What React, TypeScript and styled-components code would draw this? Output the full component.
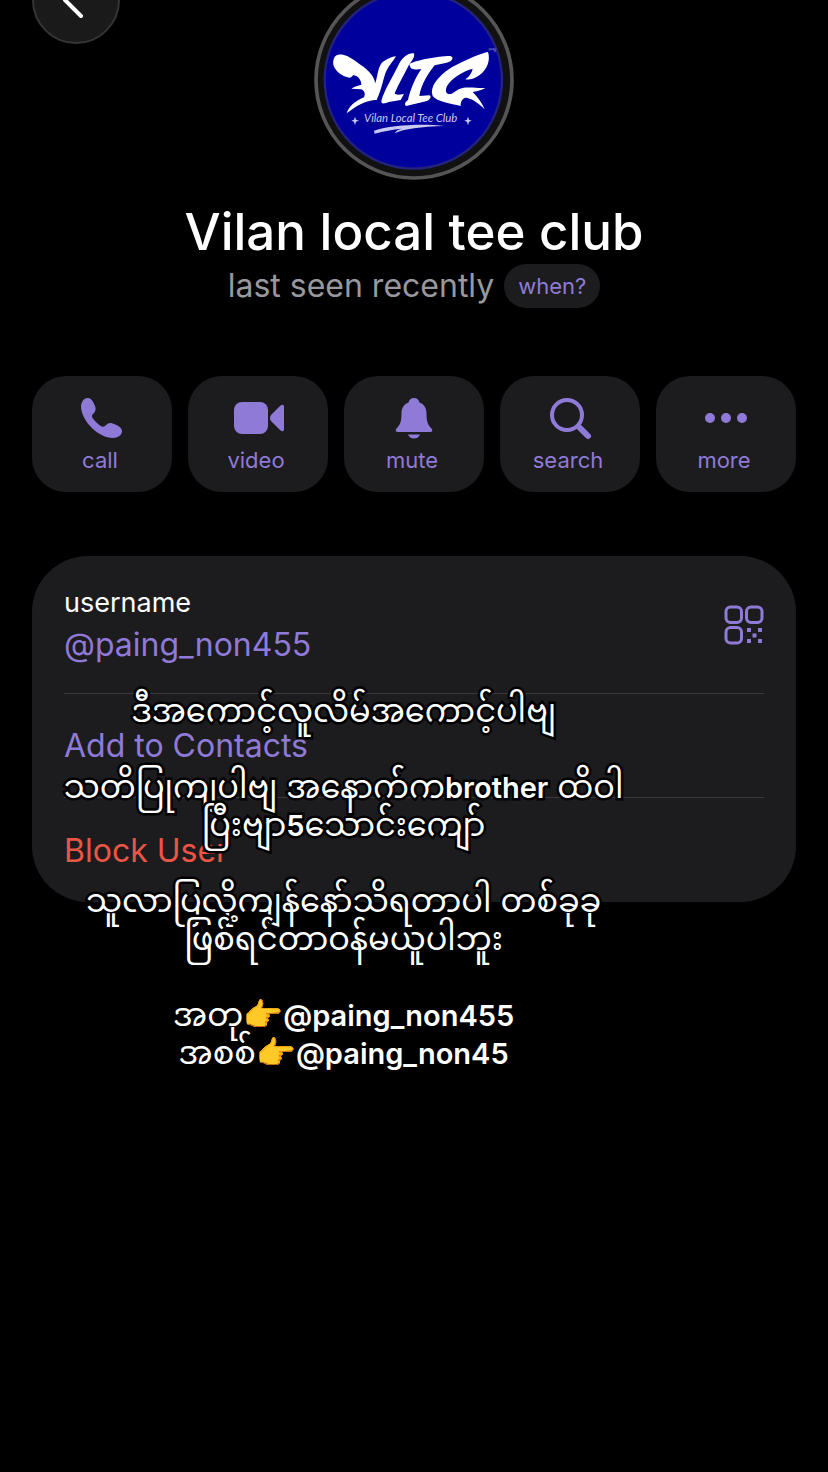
import React from 'react';
import styled, { createGlobalStyle } from 'styled-components';

const Global = createGlobalStyle`
  *, *::before, *::after { box-sizing: border-box; }
  html { background: #000; }
  body { margin: 0; background: #000; font-family: Inter, "Liberation Sans", sans-serif; color: #fff; }
  button { font: inherit; border: 0; background: none; padding: 0; cursor: pointer; }
  a { text-decoration: none; }
`;

const Page = styled.main`
  position: relative;
  min-height: 100vh;
  padding: 0 32px;
  overflow: hidden;
`;

const BackButton = styled.button`
  position: absolute;
  top: -44px;
  left: 32px;
  width: 88px;
  height: 88px;
  border-radius: 50%;
  && { background: #1a1a1a; border: 2px solid #353535; }
  display: grid;
  place-items: center;
`;

const Profile = styled.header`
  display: flex;
  flex-direction: column;
  align-items: center;
`;

const Avatar = styled.svg`
  width: 200px;
  height: 200px;
  margin-top: -20px;
`;

const Name = styled.h1`
  margin: 20px 0 0;
  font-size: 51px;
  line-height: 64px;
  font-weight: 500;
`;

const Status = styled.div`
  display: flex;
  align-items: center;
  gap: 10px;
  font-size: 32px;
  line-height: 44px;
  color: #98989e;
`;

const WhenButton = styled.button`
  && {
    height: 44px;
    padding: 0 14px;
    border-radius: 22px;
    background: #1c1c1e;
    color: #8e7bd6;
    font-size: 22px;
  }
`;

const Actions = styled.nav`
  display: grid;
  grid-template-columns: repeat(5, 1fr);
  gap: 16px;
  margin-top: 68px;
`;

const ActionButton = styled.button`
  && {
    height: 116px;
    padding-top: 18px;
    border-radius: 34px;
    background: #1c1c1e;
    color: #8f7ad8;
    font-size: 22px;
    line-height: 28px;
  }
  display: flex;
  flex-direction: column;
  align-items: center;
  gap: 4px;
  svg { width: 52px; height: 48px; flex: none; }
`;

const ActionLabel = styled.span`
  padding-right: 4px;
`;

const Card = styled.section`
  margin-top: 64px;
  padding: 0 32px;
  border-radius: 56px;
  background: #1c1c1e;
`;

const UserRow = styled.div`
  display: flex;
  align-items: center;
  justify-content: space-between;
  height: 138px;
  border-bottom: 1px solid #3a3a3c;
`;

const Field = styled.div`
  display: flex;
  flex-direction: column;
`;

const Label = styled.span`
  font-size: 27px;
  line-height: 40px;
`;

const Handle = styled.a`
  font-size: 32px;
  line-height: 44px;
  color: #8f7ad8;
`;

const QrButton = styled.button`
  && { color: #8f7ad8; }
  width: 40px;
  height: 40px;
  svg { display: block; }
`;

const RowButton = styled.button<{ $danger?: boolean }>`
  && {
    display: block;
    width: 100%;
    height: 104px;
    text-align: left;
    font-size: 32px;
    color: ${(p) => (p.$danger ? '#eb5545' : '#8f7ad8')};
    border-bottom: ${(p) => (p.$danger ? '0' : '1px solid #3a3a3c')};
  }
`;

const Caption = styled.div`
  position: absolute;
  top: 692px;
  left: 0;
  width: 83%;
  text-align: center;
  font-family: Inter, "Noto Sans Myanmar", "Noto Sans", sans-serif;
  font-size: 32px;
  line-height: 38px;
  font-weight: 400;
  -webkit-text-stroke: 5px #000;
  paint-order: stroke fill;
  pointer-events: none;
  p { margin: 0 0 38px; white-space: nowrap; }
  b { font-size: 29px; line-height: 1; font-weight: 600; }
`;

const actions = [
  {
    label: 'call',
    icon: (
      <path d="M14 4C9 4 7 9 7 13C8 28 25 44 39 44C44 44 48 41 48 37C48 34 45 32 40 30C36 28 34 29 31 32C29 34 26 32 22 28C18 24 17 22 19 20C22 17 22 15 21 12C19 7 17 4 14 4Z" />
    ),
  },
  {
    label: 'video',
    icon: (
      <>
        <rect x="4" y="8" width="34" height="32" rx="8" />
        <path d="M41 21L50 12Q54 9 54 13V35Q54 39 50 36L41 27Q39 24 41 21Z" />
      </>
    ),
  },
  {
    label: 'mute',
    icon: (
      <>
        <path d="M28 4C25 4 23 6 22.500 8.500C18 10 15.500 14 15.500 19C15.500 28 14 31 10.500 34.500C9 36.500 9.500 38 12 38H44C46.500 38 47 36.500 45.500 34.500C42 31 40.500 28 40.500 19C40.500 14 38 10 33.500 8.500C33 6 31 4 28 4Z" />
        <path d="M22 40.500H34C33 43 31 44.500 28 44.500S23 43 22 40.500Z" />
      </>
    ),
  },
  {
    label: 'search',
    icon: (
      <g fill="none" stroke="currentColor">
        <circle cx="25" cy="21" r="15" strokeWidth="4" />
        <path d="M37 33L46 42" strokeWidth="6" strokeLinecap="round" />
      </g>
    ),
  },
  {
    label: 'more',
    icon: (
      <>
        <circle cx="12" cy="24" r="5" />
        <circle cx="28" cy="24" r="5" />
        <circle cx="44" cy="24" r="5" />
      </>
    ),
  },
];

const ClubLogo = () => (
  <Avatar viewBox="30 -60 600 600" role="img" aria-label="Vilan Local Tee Club">
    <circle cx="330" cy="240" r="294" fill="#111" stroke="#555" strokeWidth="11" />
    <circle cx="328" cy="240" r="266" fill="#00009c" stroke="#23237c" strokeWidth="7" />
    <g fill="#fff">
      <path d="M88 182C92 156 122 158 158 186C190 208 208 222 214 250C222 222 222 200 236 186C250 176 264 170 276 169C266 186 254 196 244 220C236 245 232 270 218 300C200 300 172 305 128 340C136 318 152 304 180 292C186 280 180 270 170 268L142 266C152 258 162 258 172 254C172 240 162 228 150 226C142 226 146 236 130 232C100 222 84 200 88 182Z" />
      <path d="M330 160C312 158 296 172 286 190C270 225 240 270 232 304C232 314 244 310 254 306L290 300L300 282C286 284 276 286 272 280C284 250 300 225 312 200C318 186 334 176 330 160Z" />
      <path d="M316 192C332 182 400 168 438 168C452 170 446 184 428 188L392 196C376 215 350 255 346 288L376 286C384 290 378 300 366 304L306 318C300 312 304 306 312 300C318 270 338 225 352 208C334 208 318 212 316 192Z" />
      <path d="M552 156C560 180 550 208 526 226C512 236 498 240 484 238C496 230 504 218 506 206C480 212 440 236 428 260C422 276 428 284 442 282L464 268C486 258 520 266 544 264C530 272 516 274 506 276C520 290 534 308 542 328C526 312 508 298 490 294C478 290 470 302 470 318C440 310 400 306 386 288C376 262 400 230 440 204C470 186 530 160 552 156Z" />
    </g>
    <g fill="#c9c9f4">
      <text x="180" y="366" fontFamily="Lato, sans-serif" fontSize="34" fontStyle="italic">Vilan Local Tee Club</text>
      <path d="M210 392C260 376 350 370 422 378C350 380 300 386 272 400C276 392 284 388 294 386C264 388 240 394 212 401Z" />
      <path d="M153 350L156 359L165 362L156 365L153 376L150 365L142 362L150 359Z" />
      <path d="M492 350L495 359L503 362L495 365L492 376L489 365L481 362L489 359Z" />
      <path d="M554 145H578L574 158L566 149L554 152Z" fill="#4b4bb5" />
    </g>
  </Avatar>
);

export default function App() {
  return (
    <Page>
      <Global />
      <BackButton aria-label="Back">
        <svg width="40" height="40" viewBox="-20 -20 40 40" fill="none" stroke="#fff" strokeWidth="4" strokeLinecap="round" strokeLinejoin="round">
          <path d="M5 -16L-11 0L5 16" />
        </svg>
      </BackButton>
      <Profile>
        <ClubLogo />
        <Name>Vilan local tee club</Name>
        <Status>
          last seen recently <WhenButton>when?</WhenButton>
        </Status>
      </Profile>
      <Actions>
        {actions.map((a) => (
          <ActionButton key={a.label}>
            <svg viewBox="2 0 52 48" fill="currentColor">{a.icon}</svg>
            <ActionLabel>{a.label}</ActionLabel>
          </ActionButton>
        ))}
      </Actions>
      <Card>
        <UserRow>
          <Field>
            <Label>username</Label>
            <Handle href="#paing_non455">@paing_non455</Handle>
          </Field>
          <QrButton aria-label="QR code">
            <svg width="40" height="40" viewBox="0 0 40 40" fill="none" stroke="currentColor" strokeWidth="3">
              <rect x="2" y="2" width="15.500" height="15.500" rx="4.500" />
              <rect x="22.500" y="2" width="15.500" height="15.500" rx="4.500" />
              <rect x="2" y="22.500" width="15.500" height="15.500" rx="4.500" />
              <path d="M23 25h4M34 25h4M28.500 30.500h4M23 36h4M34 36h4" strokeWidth="4" />
            </svg>
          </QrButton>
        </UserRow>
        <RowButton>Add to Contacts</RowButton>
        <RowButton $danger>Block User</RowButton>
      </Card>
      <Caption>
        <p>ဒီအကောင့်လူလိမ်အကောင့်ပါဗျ</p>
        <p>သတိပြုကျပါဗျ အနောက်က<b>brother</b> ထိဝါ<br />ပြီးဗျာ<b>5</b>သောင်းကျော်</p>
        <p>သူလာပြလို့ကျန်နော်သိရတာပါ တစ်ခုခု<br />ဖြစ်ရင်တာဝန်မယူပါဘူး</p>
        <p>အတု👉<b>@paing_non455</b><br />အစစ်👉<b>@paing_non45</b></p>
      </Caption>
    </Page>
  );
}
